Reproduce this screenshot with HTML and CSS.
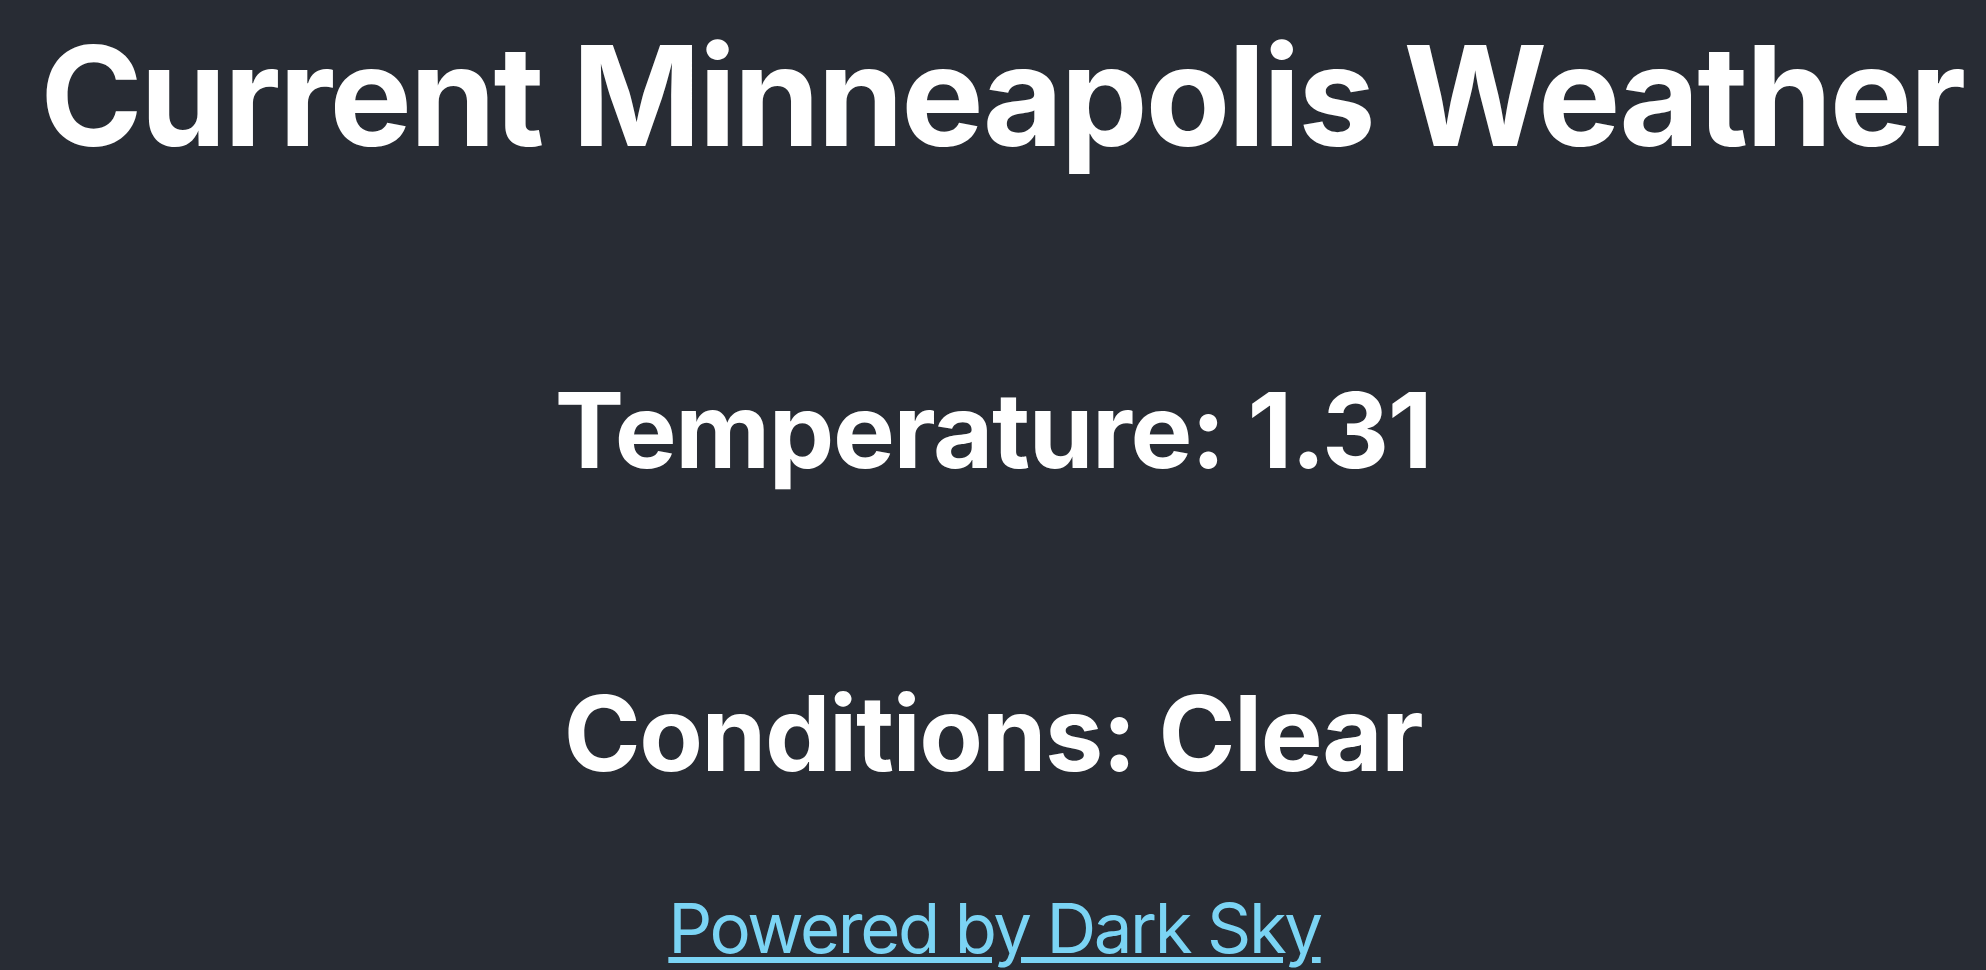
FILE: index.html
```html
<!DOCTYPE html>
<html lang="en">
<head>
<meta charset="utf-8">
<title>Current Minneapolis Weather</title>
<link rel="stylesheet" href="styles.css">
</head>
<body>
<div class="app">
  <header class="app-header">
    <h1 class="title">Current Minneapolis Weather</h1>
    <h2 class="stat stat-temp">Temperature: 1.31</h2>
    <h2 class="stat stat-cond">Conditions: Clear</h2>
    <a class="app-link" href="#">Powered by Dark Sky</a>
  </header>
</div>
</body>
</html>
```

FILE: styles.css
```css
html, body {
  margin: 0;
  padding: 0;
  background: #282c34;
}

body {
  font-family: Inter, "Noto Sans", "Liberation Sans", sans-serif;
  color: #ffffff;
  overflow: hidden;
}

.app {
  text-align: center;
}

.app-header {
  display: flex;
  flex-direction: column;
  align-items: center;
  min-height: 100vh;
}

.title {
  margin: 27px 0 0 0;
  padding-left: 18px;
  font-size: 138.5px;
  line-height: 1;
  font-weight: 700;
  letter-spacing: -2.45px;
  white-space: nowrap;
}

.stat {
  margin: 0;
  font-size: 104px;
  line-height: 1;
  font-weight: 700;
  letter-spacing: -1.4px;
  white-space: nowrap;
}

.stat-temp {
  margin-top: 212px;
}

.stat-cond {
  margin-top: 199px;
}

.app-link {
  display: block;
  margin-top: 109px;
  padding-left: 3px;
  font-size: 69px;
  line-height: 1;
  font-weight: 400;
  letter-spacing: -2.45px;
  color: #7bd4f4;
  text-decoration: underline;
  white-space: nowrap;
}
```
